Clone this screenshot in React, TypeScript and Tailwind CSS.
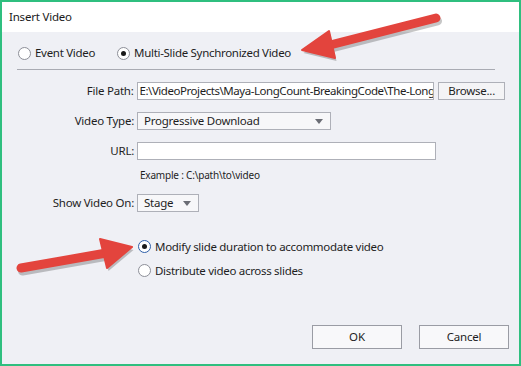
const font = { fontFamily: '"Noto Sans", "Open Sans", sans-serif' };

function Radio({ checked, focused, label }: { checked?: boolean; focused?: boolean; label: string }) {
  return (
    <div className="flex items-center gap-[4px]">
      <span
        className={
          'flex h-[13px] w-[13px] items-center justify-center rounded-full border bg-white ' +
          (focused ? 'border-[#2d5ea8]' : 'border-[#8d8f98]')
        }
      >
        {checked && <span className="h-[5px] w-[5px] rounded-full bg-[#1a1a1a]" />}
      </span>
      <span className="text-[11.5px] tracking-[-0.3px] text-[#1e1e1e]">{label}</span>
    </div>
  );
}

function Select({ value, width }: { value: string; width: string }) {
  return (
    <div className={`flex h-[18px] items-center justify-between border border-[#aeb0b8] bg-[#f7f7f9] pl-[6px] pr-[7px] ${width}`}>
      <span className="text-[11.5px] leading-none tracking-[-0.25px] text-[#1e1e1e]">{value}</span>
      <svg width="8" height="5" viewBox="0 0 8 5">
        <path d="M0 0h8L4 5z" fill="#6b6d75" />
      </svg>
    </div>
  );
}

function Arrow({ tail, tip, up, down }: { tail: [number, number]; tip: [number, number]; up: [number, number]; down: [number, number] }) {
  const mx = (up[0] + down[0]) / 2;
  const my = (up[1] + down[1]) / 2;
  const head = `${tip[0]},${tip[1]} ${up[0]},${up[1]} ${down[0]},${down[1]}`;
  return (
    <g>
      <g transform="translate(1.5,3)" opacity="0.22">
        <line x1={tail[0]} y1={tail[1]} x2={mx} y2={my} stroke="#000" strokeWidth="9" strokeLinecap="round" />
        <polygon points={head} fill="#000" />
      </g>
      <line x1={tail[0]} y1={tail[1]} x2={mx} y2={my} stroke="#e3443d" strokeWidth="9" strokeLinecap="round" />
      <polygon points={head} fill="#e3443d" stroke="#e3443d" strokeWidth="2" strokeLinejoin="round" />
    </g>
  );
}

export default function App() {
  return (
    <div className="relative h-[366px] w-[521px] overflow-hidden" style={font}>
      <div className="flex h-full w-full flex-col border-2 border-[#2fbf7f] bg-[#eff0f5]">
        <div className="flex h-[30px] items-center bg-white pl-[7px] text-[11.5px] tracking-[-0.2px] text-[#1a1a1a]">
          Insert Video
        </div>

        <div className="flex flex-col px-[14px]">
          <div className="mt-[13px] flex h-[16px] items-center gap-[22px] pl-[2px]">
            <Radio label="Event Video" />
            <Radio checked label="Multi-Slide Synchronized Video" />
          </div>

          <div className="ml-[1px] mt-[8px] h-px w-[478px] bg-[#a9abb3]" />

          <div className="mt-[12px] flex items-center">
            <span className="w-[121px] pr-[3px] text-right text-[11.5px] tracking-[-0.25px] text-[#1e1e1e]">File Path:</span>
            <div className="h-[18px] w-[299px] overflow-hidden whitespace-nowrap border border-[#aeb0b8] bg-white pl-[2px] text-[11.5px] leading-[16px] tracking-[-0.45px] text-[#1e1e1e]">
              E:\VideoProjects\Maya-LongCount-BreakingCode\The-Long-
            </div>
            <button className="ml-[4px] flex h-[18px] w-[67px] items-center justify-center border border-[#aeb0b8] bg-[#f4f4f6] text-[11.5px] tracking-[-0.25px] text-[#1e1e1e]">
              Browse...
            </button>
          </div>

          <div className="mt-[12px] flex items-center">
            <span className="w-[121px] pr-[3px] text-right text-[11.5px] tracking-[-0.25px] text-[#1e1e1e]">Video Type:</span>
            <Select value="Progressive Download" width="w-[194px]" />
          </div>

          <div className="mt-[12px] flex items-center">
            <span className="w-[121px] pr-[3px] text-right text-[11.5px] tracking-[-0.25px] text-[#1e1e1e]">URL:</span>
            <div className="h-[18px] w-[299px] border border-[#aeb0b8] bg-white" />
          </div>

          <div className="mt-[8px] pl-[124px] text-[10px] leading-[14px] tracking-[-0.2px] text-[#1e1e1e]">Example : C:\path\to\video</div>

          <div className="mt-[12px] flex items-center">
            <span className="w-[121px] pr-[3px] text-right text-[11.5px] tracking-[-0.25px] text-[#1e1e1e]">Show Video On:</span>
            <Select value="Stage" width="w-[62px]" />
          </div>

          <div className="mt-[26px] flex flex-col gap-[7px] pl-[122px]">
            <Radio checked focused label="Modify slide duration to accommodate video" />
            <Radio label="Distribute video across slides" />
          </div>
        </div>

        <div className="mt-auto mb-[15px] flex justify-end gap-[17px] pr-[10px]">
          <button className="h-[24px] w-[90px] border border-[#9a9ca4] bg-[#f8f8fa] text-[11.5px] text-[#1e1e1e]">OK</button>
          <button className="h-[24px] w-[90px] border border-[#9a9ca4] bg-[#f8f8fa] text-[11.5px] tracking-[-0.25px] text-[#1e1e1e]">Cancel</button>
        </div>
      </div>

      <svg className="pointer-events-none absolute left-0 top-0" width="521" height="366">
        <Arrow tail={[436, 18]} tip={[302, 50]} up={[329, 31]} down={[335, 58]} />
        <Arrow tail={[21, 268]} tip={[132, 247]} up={[100, 239]} down={[107, 268]} />
      </svg>
    </div>
  );
}
